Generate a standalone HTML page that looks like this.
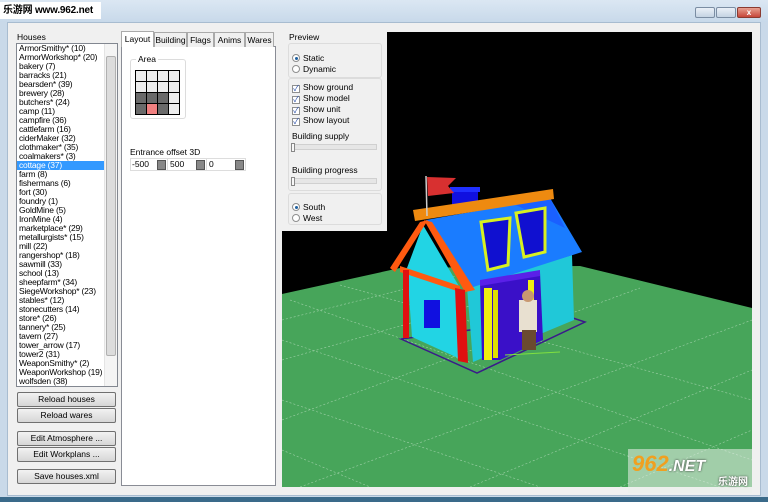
<!DOCTYPE html>
<html><head><meta charset="utf-8"><style>
*{margin:0;padding:0;box-sizing:border-box}
body{width:768px;height:502px;overflow:hidden;background:#c9d9e9;font-family:"Liberation Sans","Noto Sans CJK SC",sans-serif;font-size:9px;color:#000;position:relative}
.abs{position:absolute}
.client{left:7px;top:22px;width:754px;height:474px;background:#f0f0f0;border:1px solid #a8bcd0}
.list{left:16px;top:43px;width:102px;height:344px;background:#fff;border:1px solid #828790;overflow:hidden}
.items div{height:9px;line-height:9px;padding-left:2px;white-space:nowrap;font-size:8.5px;letter-spacing:-0.2px;width:87px}
.items .sel{background:#3399ff;color:#fff}
.sb{right:0;top:0;width:13px;height:342px;background:#f4f4f4;border-left:1px solid #e4e4e4}
.btn{left:17px;width:99px;height:15px;border:1px solid #707070;border-radius:2px;background:linear-gradient(#f2f2f2,#e4e4e4 50%,#d6d6d6);text-align:center;line-height:13px;font-size:8.5px}
.tab{top:32px;height:15px;border:1px solid #aaa;border-bottom:none;background:#f0f0f0;font-size:8.5px;line-height:14px;text-align:center}
.cb{display:inline-block;width:8px;height:8px;border:1px solid #8e8f8f;background:#fff;vertical-align:-1px;margin-right:3px;font-size:8px;line-height:6px;color:#2a4fa8;text-align:center}
.rb{display:inline-block;width:8px;height:8px;border:1px solid #8e8f8f;border-radius:50%;background:#fff;vertical-align:-1px;margin-right:3px;position:relative}
.rb.on::after{content:"";position:absolute;left:1.5px;top:1.5px;width:3px;height:3px;border-radius:50%;background:#1e5fa0}
.grp{border:1px solid #dcdcdc;border-radius:3px}
.cell{position:absolute}
</style></head><body>
<div class="abs" style="left:0;top:0;width:768px;height:22px;background:linear-gradient(#dbe7f3,#c8d9ea)"></div>
<div class="abs" style="left:0;top:2px;width:101px;height:17px;background:#fff;font-weight:bold;font-size:10px;line-height:17px;padding-left:3px;white-space:nowrap;overflow:hidden;letter-spacing:-0.2px">乐游网 www.962.net</div>
<div class="abs" style="left:695px;top:7px;width:20px;height:11px;border:1px solid #7b8da3;border-radius:2px;background:linear-gradient(#eaf0f7,#c5d3e3)"></div>
<div class="abs" style="left:716px;top:7px;width:20px;height:11px;border:1px solid #7b8da3;border-radius:2px;background:linear-gradient(#eaf0f7,#c5d3e3)"></div>
<div class="abs" style="left:737px;top:7px;width:24px;height:11px;border:1px solid #8a3a30;border-radius:2px;background:linear-gradient(#e8a090,#c6463a);color:#fff;font-size:8px;line-height:9px;text-align:center;font-weight:bold">x</div>
<div class="abs client"></div>
<div class="abs" style="left:0;top:497px;width:768px;height:5px;background:#3a6a8a"></div>

<div class="abs" style="left:17px;top:32px;font-size:8.5px">Houses</div>
<div class="abs list">
<div class="items">
<div>ArmorSmithy* (10)</div><div>ArmorWorkshop* (20)</div><div>bakery (7)</div><div>barracks (21)</div><div>bearsden* (39)</div><div>brewery (28)</div><div>butchers* (24)</div><div>camp (11)</div><div>campfire (36)</div><div>cattlefarm (16)</div><div>ciderMaker (32)</div><div>clothmaker* (35)</div><div>coalmakers* (3)</div><div class="sel">cottage (37)</div><div>farm (8)</div><div>fishermans (6)</div><div>fort (30)</div><div>foundry (1)</div><div>GoldMine (5)</div><div>IronMine (4)</div><div>marketplace* (29)</div><div>metallurgists* (15)</div><div>mill (22)</div><div>rangershop* (18)</div><div>sawmill (33)</div><div>school (13)</div><div>sheepfarm* (34)</div><div>SiegeWorkshop* (23)</div><div>stables* (12)</div><div>stonecutters (14)</div><div>store* (26)</div><div>tannery* (25)</div><div>tavern (27)</div><div>tower_arrow (17)</div><div>tower2 (31)</div><div>WeaponSmithy* (2)</div><div>WeaponWorkshop (19)</div><div>wolfsden (38)</div>
</div>
<div class="abs sb"><div class="abs" style="left:1px;top:12px;width:10px;height:300px;background:#dcdcdc;border:1px solid #b0b0b0;border-radius:2px"></div></div>
</div>
<div class="abs btn" style="top:392px">Reload houses</div>
<div class="abs btn" style="top:408px">Reload wares</div>
<div class="abs btn" style="top:431px">Edit Atmosphere ...</div>
<div class="abs btn" style="top:447px">Edit Workplans ...</div>
<div class="abs btn" style="top:469px">Save houses.xml</div>

<div class="abs" style="left:121px;top:46px;width:155px;height:440px;background:#fff;border:1px solid #898c95"></div>
<div class="abs tab" style="left:121px;top:31px;height:16px;width:33px;background:#fff;z-index:2">Layout</div>
<div class="abs tab" style="left:154px;width:33px">Building</div>
<div class="abs tab" style="left:187px;width:27px">Flags</div>
<div class="abs tab" style="left:214px;width:31px">Anims</div>
<div class="abs tab" style="left:245px;width:29px">Wares</div>
<div class="abs grp" style="left:130px;top:59px;width:56px;height:60px;background:#fff"></div>
<div class="abs" style="left:136px;top:54px;background:#fff;padding:0 2px;font-size:8.5px">Area</div>
<div class="abs" style="left:135px;top:70px;width:45px;height:45px;background:#000"></div>
<div id="grid"></div>
<div class="abs" style="left:130px;top:147px;font-size:8.5px">Entrance offset 3D</div>
<div class="abs" style="left:130px;top:158px;width:116px;height:13px;border:1px solid #ddd;background:#fff"></div>
<div class="abs" style="left:132px;top:159px;font-size:8.5px;line-height:11px">-500</div>
<div class="abs" style="left:170px;top:159px;font-size:8.5px;line-height:11px">500</div>
<div class="abs" style="left:209px;top:159px;font-size:8.5px;line-height:11px">0</div>
<div class="abs" style="left:157px;top:160px;width:9px;height:10px;background:#888;border:1px solid #555"></div>
<div class="abs" style="left:196px;top:160px;width:9px;height:10px;background:#888;border:1px solid #555"></div>
<div class="abs" style="left:235px;top:160px;width:9px;height:10px;background:#888;border:1px solid #555"></div>
<div class="abs" style="left:167px;top:158px;width:1px;height:13px;background:#ddd"></div>
<div class="abs" style="left:206px;top:158px;width:1px;height:13px;background:#ddd"></div>

<svg class="abs" style="left:282px;top:32px" width="470" height="455" viewBox="282 32 470 455">
<rect x="282" y="32" width="470" height="455" fill="#000"/>
<polygon points="282,294 400,268 580,266 752,308 752,487 282,487" fill="#47a55a"/>
<g stroke="#9fd0a8" stroke-width="0.6" stroke-dasharray="2,2" fill="none">
<line x1="282" y1="320" x2="460" y2="275"/><line x1="282" y1="360" x2="560" y2="280"/><line x1="300" y1="487" x2="752" y2="320"/><line x1="470" y1="487" x2="752" y2="370"/><line x1="620" y1="487" x2="752" y2="430"/><line x1="282" y1="420" x2="640" y2="288"/>
<line x1="290" y1="300" x2="752" y2="460"/><line x1="340" y1="285" x2="752" y2="400"/><line x1="282" y1="340" x2="720" y2="487"/><line x1="282" y1="400" x2="540" y2="487"/><line x1="282" y1="450" x2="370" y2="487"/>
</g>
<polygon points="401,339 477,373 585,322 570,317" fill="none" stroke="#3a1a8a" stroke-width="1.5"/>
<polygon points="467,287 572,255 574,320 473,362" fill="#20c8d8"/>
<polygon points="407,268 423,225 460,288 467,362 412,337" fill="#22d4e4"/>
<polygon points="426,220 550,198 582,252 470,288" fill="#1a7cff"/>
<polygon points="505,200 550,198 565,228" fill="#1a60ff"/>
<rect x="452" y="190" width="26" height="16" fill="#1010e0"/>
<rect x="450" y="187" width="30" height="5" fill="#2030ff"/>
<polygon points="413,210 553,189 554,199 415,221" fill="#ee8a10"/>
<polygon points="420,222 428,220 395,272 390,268" fill="#ff5a10"/>
<polygon points="424,220 432,222 475,290 465,292" fill="#ff5a10"/>
<polygon points="400,266 460,286 460,292 400,272" fill="#ff5a10"/>
<rect x="403" y="270" width="6" height="68" fill="#e01010"/>
<polygon points="455,288 465,290 468,363 458,361" fill="#e01010"/>
<rect x="424" y="300" width="16" height="28" fill="#1010e0"/>
<polygon points="481,222 510,218 508,265 488,270" fill="#1010d0" stroke="#d8f020" stroke-width="3"/>
<polygon points="516,213 545,208 545,252 524,257" fill="#1010d0" stroke="#d8f020" stroke-width="3"/>
<polygon points="480,282 540,272 543,340 500,360 482,360" fill="#3a10c8"/>
<polygon points="480,280 540,270 540,276 480,286" fill="#5a20e8"/>
<rect x="484" y="288" width="8" height="72" fill="#f0f010"/>
<rect x="493" y="290" width="5" height="68" fill="#e0e000"/>
<rect x="528" y="280" width="6" height="62" fill="#f0f010"/>
<line x1="426" y1="176" x2="427" y2="216" stroke="#ccc" stroke-width="1.5"/>
<polygon points="427,177 456,178 448,186 454,193 428,196" fill="#d83030"/>
<rect x="519" y="300" width="18" height="32" fill="#e8e0d0"/>
<circle cx="528" cy="296" r="6" fill="#c89870"/>
<rect x="522" y="330" width="14" height="20" fill="#6a4a30"/>
<line x1="505" y1="355" x2="560" y2="352" stroke="#80e040" stroke-width="1"/>
</svg>
<div class="abs" style="left:628px;top:449px;width:124px;height:44px;background:rgba(235,240,235,0.55);font-weight:bold;font-style:italic;font-size:22px;color:#f0a020;padding:2px 4px">962<span style="color:#fff;font-size:16px;text-shadow:0 0 2px #333">.NET</span><div style="font-size:10px;color:#fff;text-shadow:0 0 2px #333;text-align:right;margin-top:-4px;font-style:normal">乐游网</div></div>

<div class="abs" style="left:282px;top:32px;width:105px;height:199px;background:#f0f0f0"></div>
<div class="abs" style="left:289px;top:32px;font-size:8.5px">Preview</div>
<div class="abs grp" style="left:288px;top:43px;width:94px;height:35px"></div>
<div class="abs" style="left:292px;top:53px;font-size:8.5px;line-height:11px"><span class="rb on"></span>Static<br><span class="rb"></span>Dynamic</div>
<div class="abs grp" style="left:288px;top:78px;width:94px;height:113px"></div>
<div class="abs" style="left:292px;top:82px;font-size:8.5px;line-height:11px"><span class="cb">✓</span>Show ground<br><span class="cb">✓</span>Show model<br><span class="cb">✓</span>Show unit<br><span class="cb">✓</span>Show layout</div>
<div class="abs" style="left:292px;top:131px;font-size:8.5px">Building supply</div>
<div class="abs" style="left:291px;top:144px;width:86px;height:6px;background:#e6e6e6;border:1px solid #d0d0d0"></div>
<div class="abs" style="left:291px;top:143px;width:4px;height:9px;background:#f8f8f8;border:1px solid #888"></div>
<div class="abs" style="left:292px;top:165px;font-size:8.5px">Building progress</div>
<div class="abs" style="left:291px;top:178px;width:86px;height:6px;background:#e6e6e6;border:1px solid #d0d0d0"></div>
<div class="abs" style="left:291px;top:177px;width:4px;height:9px;background:#f8f8f8;border:1px solid #888"></div>
<div class="abs grp" style="left:288px;top:193px;width:94px;height:32px"></div>
<div class="abs" style="left:292px;top:202px;font-size:8.5px;line-height:11px"><span class="rb on"></span>South<br><span class="rb"></span>West</div>

<script>
var g=document.getElementById('grid'),h='';
var col=[['e','e','e','e'],['e','e','e','e'],['d','d','d','e'],['d','r','d','e']];
var c={e:'#eeeeee',d:'#6a6a6a',r:'#f08080'};
for(var r=0;r<4;r++)for(var k=0;k<4;k++)h+='<div class="cell" style="left:'+(136+k*11)+'px;top:'+(71+r*11)+'px;width:10px;height:10px;background:'+c[col[r][k]]+'"></div>';
g.innerHTML=h;
</script>
</body></html>
